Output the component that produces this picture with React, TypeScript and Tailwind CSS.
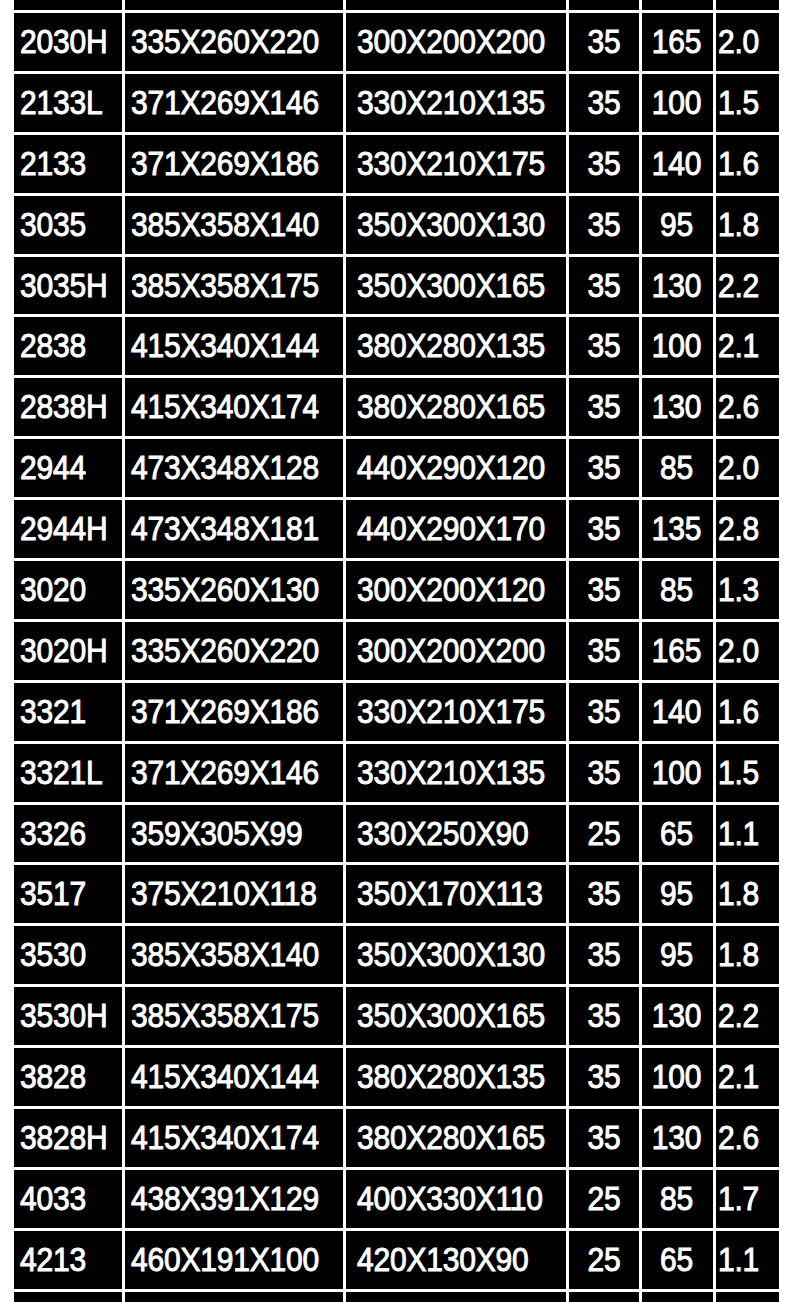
const ROWS: string[][] = [
  ["2030H", "335X260X220", "300X200X200", "35", "165", "2.0"],
  ["2133L", "371X269X146", "330X210X135", "35", "100", "1.5"],
  ["2133", "371X269X186", "330X210X175", "35", "140", "1.6"],
  ["3035", "385X358X140", "350X300X130", "35", "95", "1.8"],
  ["3035H", "385X358X175", "350X300X165", "35", "130", "2.2"],
  ["2838", "415X340X144", "380X280X135", "35", "100", "2.1"],
  ["2838H", "415X340X174", "380X280X165", "35", "130", "2.6"],
  ["2944", "473X348X128", "440X290X120", "35", "85", "2.0"],
  ["2944H", "473X348X181", "440X290X170", "35", "135", "2.8"],
  ["3020", "335X260X130", "300X200X120", "35", "85", "1.3"],
  ["3020H", "335X260X220", "300X200X200", "35", "165", "2.0"],
  ["3321", "371X269X186", "330X210X175", "35", "140", "1.6"],
  ["3321L", "371X269X146", "330X210X135", "35", "100", "1.5"],
  ["3326", "359X305X99", "330X250X90", "25", "65", "1.1"],
  ["3517", "375X210X118", "350X170X113", "35", "95", "1.8"],
  ["3530", "385X358X140", "350X300X130", "35", "95", "1.8"],
  ["3530H", "385X358X175", "350X300X165", "35", "130", "2.2"],
  ["3828", "415X340X144", "380X280X135", "35", "100", "2.1"],
  ["3828H", "415X340X174", "380X280X165", "35", "130", "2.6"],
  ["4033", "438X391X129", "400X330X110", "25", "85", "1.7"],
  ["4213", "460X191X100", "420X130X90", "25", "65", "1.1"],
];

// per-column cell alignment / padding
const CELL = [
  "justify-start pl-[6px]",
  "justify-start pl-[6px]",
  "justify-start pl-[11px]",
  "justify-center",
  "justify-center pr-[2px]",
  "justify-start pl-[2px]",
];

function Cell({ text, col }: { text: string; col: number }) {
  return (
    <div className={`flex h-[57.9px] items-center bg-black ${CELL[col]}`}>
      <span className="inline-block scale-y-[1.12] text-[30px] leading-none font-normal tracking-[-0.2px] text-white [-webkit-text-stroke:0.9px_white]">
        {text}
      </span>
    </div>
  );
}

export default function App() {
  const blank = [0, 1, 2, 3, 4, 5];
  return (
    <div className="h-[1302px] overflow-hidden bg-white pl-[14px] font-['Liberation_Sans',Arial,sans-serif]">
      <div className="grid w-[765px] grid-cols-[108px_218px_220px_70px_71px_63px] gap-[3px] bg-white">
        {blank.map((c) => (
          <div key={`t${c}`} className="h-[10px] bg-black" />
        ))}
        {ROWS.map((row, r) =>
          row.map((t, c) => <Cell key={`${r}-${c}`} text={t} col={c} />)
        )}
        {blank.map((c) => (
          <div key={`b${c}`} className="h-[20px] bg-black" />
        ))}
      </div>
    </div>
  );
}
